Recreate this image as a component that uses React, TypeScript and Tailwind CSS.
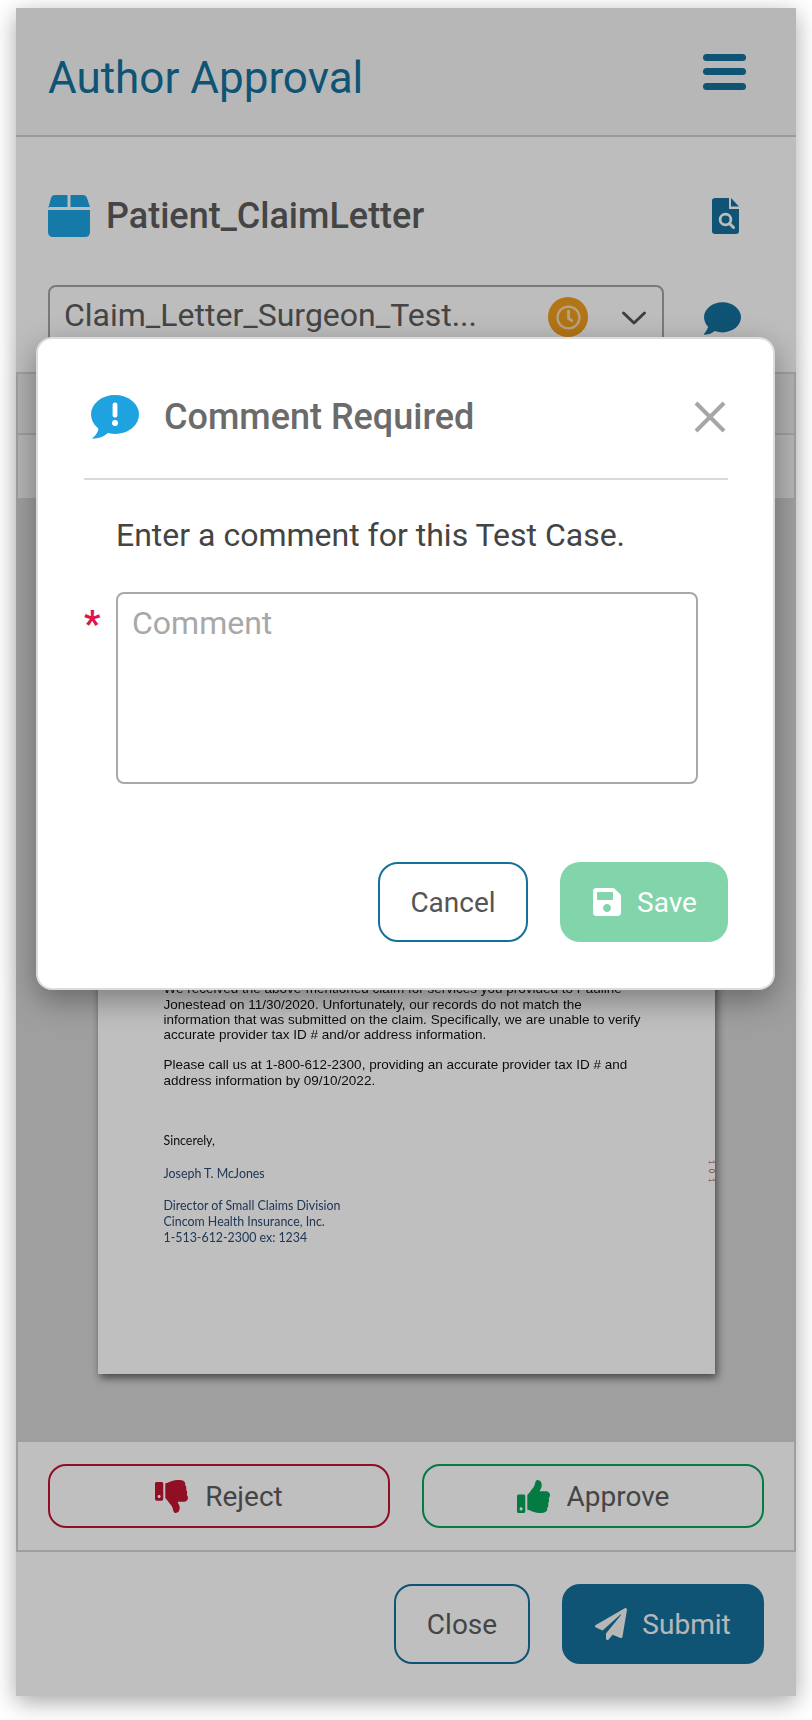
import React from "react";
import { FaThumbsUp, FaThumbsDown, FaPaperPlane, FaSave, FaComment, FaRegClock } from "react-icons/fa";

const roboto = "font-['Roboto',sans-serif]";

function Chevron() {
  return (
    <svg width="26" height="16" viewBox="0 0 26 16" fill="none">
      <path d="M2.5 3 L13 13 L23.5 3" stroke="#555" strokeWidth="3" strokeLinecap="round" strokeLinejoin="round" />
    </svg>
  );
}

function PackageIcon() {
  return (
    <svg width="42" height="42" viewBox="0 0 42 42">
      <path d="M0 14 L3 3 Q4 0 7 0 H19.5 V12 H0 Z M22.5 0 H35 Q38 0 39 3 L42 12 H22.5 Z" fill="#1ea3e0" />
      <path d="M0 15 H42 V37 Q42 42 37 42 H5 Q0 42 0 37 Z" fill="#1ea3e0" />
    </svg>
  );
}

function FileSearch() {
  return (
    <svg width="28" height="36" viewBox="0 0 28 36">
      <path d="M3 0 H17 V11 H27 V33 Q27 36 24 36 H3 Q0 36 0 33 V3 Q0 0 3 0 Z" fill="#14719c" />
      <path d="M19 0 L27 8.5 H19 Z" fill="#14719c" />
      <circle cx="13.5" cy="21.5" r="5.4" fill="none" stroke="#fdfdfd" strokeWidth="2.8" />
      <path d="M17.5 25.5 L21.5 29.5" stroke="#fdfdfd" strokeWidth="3" strokeLinecap="round" />
    </svg>
  );
}

function AlertBubble() {
  return (
    <svg width="48" height="44" viewBox="0 0 48 44">
      <ellipse cx="24" cy="19.5" rx="24" ry="19.5" fill="#1ea3e0" />
      <path d="M8 30 C8 36 5 41 0.5 43.5 C8 44 14 41 18 37 Z" fill="#1ea3e0" />
      <rect x="21.6" y="7.5" width="4.8" height="15" rx="2.2" fill="#fff" />
      <circle cx="24" cy="28" r="3" fill="#fff" />
    </svg>
  );
}

function Hamburger() {
  return (
    <div className="flex flex-col w-[43px] h-[36px] justify-between">
      <div className="h-[7px] rounded-full bg-[#14719c]" />
      <div className="h-[7px] rounded-full bg-[#14719c]" />
      <div className="h-[7px] rounded-full bg-[#14719c]" />
    </div>
  );
}

export default function App() {
  return (
    <div className={`${roboto} relative w-[812px] h-[1720px] bg-white pt-2 px-4`}>
      <div className="relative flex flex-col w-[780px] h-[1688px] bg-white shadow-[0_6px_22px_rgba(0,0,0,0.35)]">
        <header className="flex items-center justify-between h-[129px] shrink-0 bg-[#f5f5f5] border-b-2 border-[#cfcfcf] pl-8 pr-[50px]">
          <h1 className="mt-[13px] text-[44px] leading-none text-[#14719c]">Author Approval</h1>
          <Hamburger />
        </header>

        <section className="h-[235px] shrink-0 bg-[#fdfdfd] pl-8 pr-[56px]">
          <div className="flex items-center justify-between h-12 mt-[55px]">
            <div className="flex items-center gap-4">
              <PackageIcon />
              <span className="text-[36px] font-medium leading-none text-[#5c5c5c]">Patient_ClaimLetter</span>
            </div>
            <FileSearch />
          </div>
          <div className="flex items-start justify-between mt-[45px] -mr-px">
            <div className="flex items-center w-[616px] h-[66px] rounded-lg border-2 border-[#a3a3a3] pl-[14px] pr-[15px] pb-[6px]">
              <span className="text-[32px] leading-none text-[#5c5c5c]">Claim_Letter_Surgeon_Test...</span>
              <span className="ml-auto flex items-center justify-center w-10 h-10 rounded-full bg-[#ee9d1f] text-[#f5dcb4] text-[25px] mt-[4px]">
                <FaRegClock />
              </span>
              <span className="ml-[33px] mt-[6px] flex"><Chevron /></span>
            </div>
            <FaComment className="text-[#14719c] mt-[15px]" size={37} />
          </div>
        </section>

        <main className="flex flex-col flex-1 min-h-0 bg-[#d5d5d5]">
          <div className="h-[63px] shrink-0 bg-[#ececec] border-x-2 border-t-2 border-b-2 border-[#d4d4d4]" />
          <div className="h-[63px] shrink-0 bg-[#f2f2f2] border-x-2 border-[#d4d4d4]" />
          <div className="flex flex-1 min-h-0 justify-center pt-6 pb-[68px]">
            <article className="relative flex flex-col justify-end w-[617px] bg-white pl-[66px] pr-8 pb-[128px] overflow-hidden shadow-[2px_4px_8px_rgba(0,0,0,0.55)] font-['Liberation_Sans',sans-serif] text-[13.5px] leading-[15.3px] text-[#111]">
              <div className="blur-[0.4px]">
                <p className="whitespace-nowrap">We received the above-mentioned claim for services you provided to Pauline</p>
                <p className="whitespace-nowrap">Jonestead on 11/30/2020. Unfortunately, our records do not match the</p>
                <p className="whitespace-nowrap">information that was submitted on the claim. Specifically, we are unable to verify</p>
                <p className="whitespace-nowrap">accurate provider tax ID # and/or address information.</p>
                <p className="whitespace-nowrap mt-[15px]">Please call us at 1-800-612-2300, providing an accurate provider tax ID # and</p>
                <p className="whitespace-nowrap">address information by 09/10/2022.</p>
                <div className="font-['Lato',sans-serif] text-[12.4px] leading-[16px]">
                  <p className="mt-[45px] text-[#111]">Sincerely,</p>
                  <p className="mt-[17px] text-[#2b4a73]">Joseph T. McJones</p>
                  <p className="mt-[16px] text-[#2b4a73]">Director of Small Claims Division</p>
                  <p className="text-[#2b4a73]">Cincom Health Insurance, Inc.</p>
                  <p className="text-[#2b4a73]">1-513-612-2300 ex: 1234</p>
                </div>
              </div>
              <span className="absolute right-0 bottom-[187px] [writing-mode:vertical-rl] font-['Lato',sans-serif] text-[7px] tracking-[5px] leading-none text-[#a8443a]">101</span>
            </article>
          </div>
        </main>

        <div className="flex gap-8 h-[110px] shrink-0 bg-white border-x-2 border-b-2 border-[#d4d4d4] pl-[30px] pt-[22px]">
          <button className="flex items-center justify-center gap-[17px] w-[342px] h-[64px] rounded-[18px] border-2 border-[#c21432] text-[28px] text-[#5c5c5c]">
            <FaThumbsDown className="text-[#c21432]" size={33} />
            <span className="pt-px">Reject</span>
          </button>
          <button className="flex items-center justify-center gap-[17px] w-[342px] h-[64px] rounded-[18px] border-2 border-[#07a35a] text-[28px] text-[#5c5c5c]">
            <FaThumbsUp className="text-[#07a35a]" size={33} />
            <span className="pt-px">Approve</span>
          </button>
        </div>

        <footer className="flex justify-end gap-8 h-[144px] shrink-0 bg-white pr-8 pt-8">
          <button className="w-[136px] h-20 rounded-[18px] border-2 border-[#14719c] pt-px text-[28px] text-[#5c5c5c]">Close</button>
          <button className="flex items-center justify-center gap-[15px] w-[202px] h-20 rounded-[18px] bg-[#14719c] text-[28px] text-[#f4f4f4]">
            <FaPaperPlane size={32} />
            <span className="pt-px">Submit</span>
          </button>
        </footer>

        <div className="absolute inset-0 bg-black/25" />
      </div>

      <div className="absolute left-[36px] top-[337px] w-[739px] h-[653px] rounded-[16px] bg-white border-2 border-[#dcdcdc] shadow-[0_10px_30px_rgba(0,0,0,0.35)] pl-[46px] pr-[45px]">
        <div className="flex items-center h-[141px] border-b-2 border-[#dadada] pl-[7px] pt-[16px]">
          <AlertBubble />
          <h2 className="ml-[25px] text-[36px] font-medium leading-none text-[#6b6b6b]">Comment Required</h2>
          <svg className="ml-auto mr-[2px]" width="32" height="32" viewBox="0 0 32 32" fill="none">
            <path d="M2 2 L30 30 M30 2 L2 30" stroke="#a6a6a6" strokeWidth="4" />
          </svg>
        </div>
        <p className="mt-[39px] pl-8 text-[32px] leading-none text-[#444]">Enter a comment for this Test Case.</p>
        <div className="flex mt-[41px]">
          <span className="w-8 pt-[14px] text-[36px] font-bold leading-none text-[#dc1450]">*</span>
          <textarea
            className="w-[582px] h-[192px] rounded-lg border-2 border-[#a8a8a8] px-[14px] py-[5px] text-[32px] resize-none outline-none placeholder:text-[#a8a8a8]"
            placeholder="Comment"
            readOnly
          />
        </div>
        <div className="flex justify-end gap-8 mt-[78px]">
          <button className="w-[150px] h-20 rounded-[20px] border-2 border-[#14719c] pt-px text-[28px] text-[#555]">Cancel</button>
          <button className="flex items-center justify-center gap-[14px] w-[168px] h-20 rounded-[20px] bg-[#82d5aa] text-[28px] text-white">
            <FaSave size={32} />
            <span className="pt-px">Save</span>
          </button>
        </div>
      </div>
    </div>
  );
}
